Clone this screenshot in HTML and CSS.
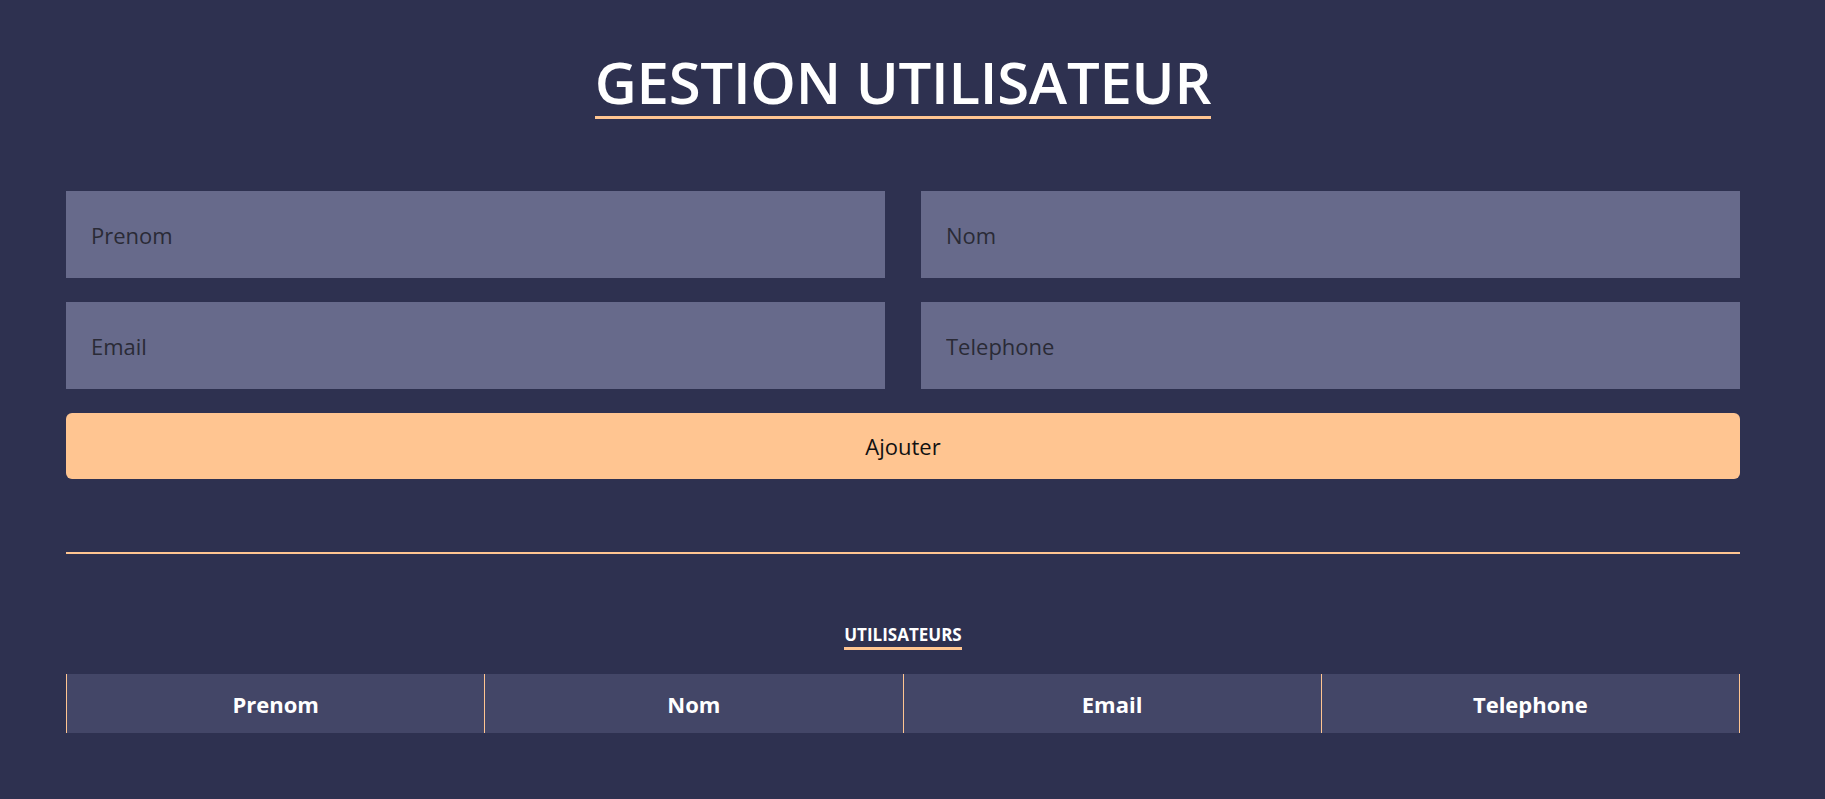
FILE: index.html
```html
<!DOCTYPE html>
<html lang="fr">
<head>
<meta charset="utf-8">
<title>Gestion utilisateur</title>
<link rel="stylesheet" href="styles.css">
</head>
<body>
<main class="page">
  <header class="header">
    <h1 class="title">GESTION UTILISATEUR</h1>
  </header>
  <form class="form">
    <div class="grid">
      <input class="field" type="text" placeholder="Prenom">
      <input class="field" type="text" placeholder="Nom">
      <input class="field" type="text" placeholder="Email">
      <input class="field" type="text" placeholder="Telephone">
    </div>
    <button class="btn" type="button">Ajouter</button>
  </form>
  <hr class="divider">
  <section class="users">
    <h2 class="subtitle">UTILISATEURS</h2>
    <table class="table">
      <thead>
        <tr>
          <th>Prenom</th>
          <th>Nom</th>
          <th>Email</th>
          <th>Telephone</th>
        </tr>
      </thead>
    </table>
  </section>
</main>
</body>
</html>
```

FILE: styles.css
```css
* { box-sizing: border-box; }
html, body {
  margin: 0;
  padding: 0;
  background: #2e3150;
  height: 100%;
}
body {
  font-family: "Open Sans", "Noto Sans", sans-serif;
  color: #fff;
}
.page {
  width: 1674px;
  margin-left: 66px;
}
.header {
  display: flex;
  justify-content: center;
  padding-top: 47px;
}
.title {
  margin: 0;
  font-size: 58px;
  font-weight: 600;
  line-height: 69px;
  letter-spacing: -0.25px;
  border-bottom: 3px solid #ffc591;
  color: #fff;
}
.form {
  margin-top: 72px;
  display: flex;
  flex-direction: column;
  gap: 24px;
}
.grid {
  display: grid;
  grid-template-columns: 1fr 1fr;
  column-gap: 36px;
  row-gap: 24px;
}
.field {
  height: 87px;
  border: none;
  background: #676a8b;
  padding: 0 25px;
  font-family: inherit;
  font-size: 22px;
  color: #222;
  outline: none;
}
.field::placeholder {
  color: #2a2a36;
  opacity: 1;
}
.btn {
  height: 66px;
  border: none;
  border-radius: 6px;
  background: #ffc591;
  font-family: inherit;
  font-size: 22px;
  color: #111;
  cursor: pointer;
}
.divider {
  margin: 73px 0 0;
  border: none;
  height: 2px;
  background: #ffc591;
}
.users {
  display: flex;
  flex-direction: column;
  align-items: center;
  padding-top: 71px;
}
.subtitle {
  margin: 0 0 24px;
  font-size: 17px;
  font-weight: 700;
  line-height: 20px;
  padding-bottom: 2px;
  border-bottom: 3px solid #ffc591;
}
.table {
  width: 100%;
  border-collapse: collapse;
  table-layout: fixed;
}
.table th {
  height: 59px;
  padding: 0;
  background: #434667;
  border-left: 1px solid #ffc591;
  border-right: 1px solid #ffc591;
  font-size: 22px;
  font-weight: 700;
  color: #fff;
  text-align: center;
}
```
